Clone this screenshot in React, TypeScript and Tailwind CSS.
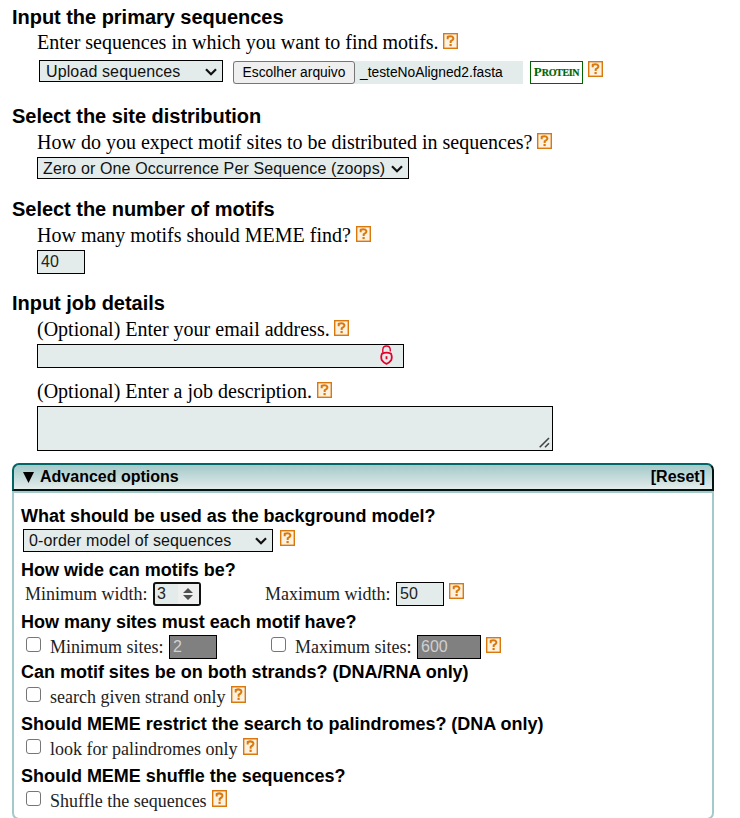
import type { ReactNode } from 'react';

function Help({ className = '', size = 'h-4' }: { className?: string; size?: string }) {
  return (
    <svg className={`w-[15px] shrink-0 ${size} ${className}`} viewBox="0 0 15 16" preserveAspectRatio="none">
      <rect x="0.7" y="0.7" width="13.6" height="14.6" fill="#fdf1e0" stroke="#d9780c" strokeWidth="1.4" />
      <path d="M4.7 6.2V3.8Q7.4 2.7 9.4 3.7Q11.2 5 9.8 6.7L7.7 8.3V10" fill="none" stroke="#d9780c" strokeWidth="2" />
      <rect x="6.5" y="11" width="2.2" height="2.1" fill="#d9780c" />
    </svg>
  );
}

function Heading({ children, className = '' }: { children: ReactNode; className?: string }) {
  return (
    <h2 className={`ml-3 h-[26px] whitespace-nowrap font-["Liberation_Sans",Arial,sans-serif] text-[20px] leading-[26px] font-bold tracking-[-0.03px] ${className}`}>
      {children}
    </h2>
  );
}

function Label({ children, width, className = '' }: { children: ReactNode; width: string; className?: string }) {
  return (
    <div className={`ml-[37px] flex h-[26px] items-start text-[20px] leading-[24px] ${className}`}>
      <span className={`shrink-0 whitespace-nowrap ${width}`}>{children}</span>
      <Help className="mt-[3px]" />
    </div>
  );
}

function Chevron() {
  return (
    <svg className="h-[8px] w-3 shrink-0" viewBox="0 0 12 8">
      <path d="M1 1.2L6 6.2L11 1.2" fill="none" stroke="#111" strokeWidth="2.2" />
    </svg>
  );
}

function Select({ children, className = '' }: { children: ReactNode; className?: string }) {
  return (
    <div className={`flex shrink-0 items-center justify-between border border-black bg-[#e4eceb] pr-[5px] font-["Liberation_Sans",Arial,sans-serif] text-[16px] tracking-[0.12px] whitespace-nowrap text-[#111] ${className}`}>
      <span>{children}</span>
      <Chevron />
    </div>
  );
}

function Field({ children, className = '' }: { children?: ReactNode; className?: string }) {
  return (
    <div className={`flex h-6 shrink-0 items-center border border-black pl-[3px] font-["Liberation_Sans",Arial,sans-serif] text-[16px] ${className}`}>
      {children}
    </div>
  );
}

function Question({ children, className = '' }: { children: ReactNode; className?: string }) {
  return (
    <h3 className={`ml-[7px] h-6 whitespace-nowrap font-["Liberation_Sans",Arial,sans-serif] text-[18px] leading-6 font-bold tracking-[-0.015px] ${className}`}>
      {children}
    </h3>
  );
}

function Check({ className = '' }: { className?: string }) {
  return <span className={`size-[15px] shrink-0 rounded-[3px] border border-[#767676] bg-white ${className}`} />;
}

function Option({ children, width }: { children: ReactNode; width: string }) {
  return (
    <div className="ml-3 flex h-[28px] items-start">
      <Check className="mt-[3px]" />
      <span className={`ml-[9px] shrink-0 text-[18px] leading-[26px] whitespace-nowrap text-[#222] ${width}`}>{children}</span>
      <Help className="mt-[2px]" size="h-[17px]" />
    </div>
  );
}

export default function App() {
  return (
    <div className='h-[818px] w-[740px] overflow-hidden bg-white pt-1 font-["Liberation_Serif","Times_New_Roman",serif] text-black'>
      <Heading>Input the primary sequences</Heading>
      <Label width="w-[406px]">Enter sequences in which you want to find motifs.</Label>
      <div className="mt-1 ml-[39px] flex h-[26px] items-start">
        <Select className="h-[22px] w-[184px] pt-px pl-[6px]">Upload sequences</Select>
        <div className='mt-px ml-[10px] flex h-[23px] w-[290px] bg-[#e4eceb] font-["Liberation_Sans",Arial,sans-serif] text-[13.8px] leading-[21px] whitespace-nowrap'>
          <span className="w-[122px] rounded-[3px] border border-[#767676] bg-[#efefef] text-center">Escolher arquivo</span>
          <span className="ml-[5px] leading-[23px]">_testeNoAligned2.fasta</span>
        </div>
        <span className="mt-px ml-[7px] flex h-[23px] w-[53px] items-baseline justify-center border border-[#006400] text-[13px] leading-[20px] font-bold text-[#006400]">
          P<span className="text-[10px] tracking-[-0.35px] [-webkit-text-stroke:0.2px_#006400]">ROTEIN</span>
        </span>
        <Help className="mt-px ml-[5px]" />
      </div>

      <Heading className="mt-[17px]">Select the site distribution</Heading>
      <Label className="mt-px" width="w-[500px]">How do you expect motif sites to be distributed in sequences?</Label>
      <Select className="mt-px ml-[37px] h-[22px] w-[372px] pt-px pl-[5px]">Zero or One Occurrence Per Sequence (zoops)</Select>

      <Heading className="mt-[17px]">Select the number of motifs</Heading>
      <Label className="mt-px" width="w-[319px]">How many motifs should MEME find?</Label>
      <Field className="mt-px ml-[37px] w-12 bg-[#e4eceb] text-[#222]">40</Field>

      <Heading className="mt-4">Input job details</Heading>
      <Label className="mt-px" width="w-[297px]">(Optional) Enter your email address.</Label>
      <Field className="mt-px ml-[37px] w-[367px] justify-end bg-[#e4eceb] pr-[10px] pb-[2px]">
        <svg className="h-5 w-[13px]" viewBox="0 0 13 20">
          <path d="M2.8 7.8V4.6Q3 1 6.5 1Q10 1 10.3 4.8V6.5" fill="none" stroke="#e4002b" strokeWidth="1.4" />
          <path d="M2 8.6Q6.5 6.8 11 8.6Q12.4 11.6 11.3 15Q9.5 17.7 6.5 18.8Q3.5 17.7 1.7 15Q0.6 11.6 2 8.6Z" fill="none" stroke="#e4002b" strokeWidth="1.8" />
          <rect x="5.6" y="11.2" width="1.8" height="3" fill="#e4002b" />
        </svg>
      </Field>
      <Label className="mt-[11px]" width="w-[280px]">(Optional) Enter a job description.</Label>
      <div className="mt-px ml-[37px] flex h-[45px] w-[516px] items-end justify-end border border-black bg-[#e4eceb] p-[2px]">
        <svg className="size-[11px]" viewBox="0 0 11 11">
          <path d="M0.7 10.3L10 1M6 10.3L10 6.3" stroke="#444" strokeWidth="1.6" />
        </svg>
      </div>

      <section className="mt-3 ml-3 w-[702px]">
        <div className='flex h-7 items-center justify-between rounded-t-[7px] border-2 border-t-[#006666] border-r-[#001414] border-b-[#001414] border-l-[#006666] bg-linear-to-b from-[#a3c9c9] to-[#e4eceb] pr-[7px] pl-[9px] font-["Liberation_Sans",Arial,sans-serif] text-[16px] font-bold'>
          <span className="flex items-center gap-[6px]">
            <svg className="h-[11px] w-[11px]" viewBox="0 0 11 11"><path d="M0 0H11L5.5 11Z" /></svg>
            Advanced options
          </span>
          <span>[Reset]</span>
        </div>
        <div className="h-[329px] rounded-b-[7px] border-2 border-[#a3c9c9] pt-[11px]">
          <Question>What should be used as the background model?</Question>
          <div className="mt-px ml-[9px] flex items-start">
            <Select className="h-[23px] w-[250px] pl-[5px]">0-order model of sequences</Select>
            <Help className="mt-px ml-[7px]" />
          </div>
          <Question className="mt-[6px]">How wide can motifs be?</Question>
          <div className="ml-[11px] flex h-6 items-start text-[18px] leading-6 whitespace-nowrap text-[#222]">
            <span className="w-[128px]">Minimum width:</span>
            <div className='flex h-6 w-12 items-center rounded-[3px] border-2 border-[#111] bg-[#e4eceb] pl-[2px] font-["Liberation_Sans",Arial,sans-serif] text-[16px]'>
              <span className="w-[21px]">3</span>
              <span className="flex h-full flex-1 items-center bg-[#efefef] pl-[5px]">
                <svg className="h-3 w-[10px]" viewBox="0 0 10 12"><path d="M5 0L10 5H0ZM0 7H10L5 12Z" fill="#505050" /></svg>
              </span>
            </div>
            <span className="ml-16 w-[131px]">Maximum width:</span>
            <Field className="w-12 bg-[#e4eceb]">50</Field>
            <Help className="mt-px ml-[5px]" />
          </div>
          <Question className="mt-1">How many sites must each motif have?</Question>
          <div className="mt-px ml-3 flex h-6 items-start text-[18px] leading-6 whitespace-nowrap text-[#222]">
            <Check className="mt-[2px]" />
            <span className="ml-[9px] w-[119px]">Minimum sites:</span>
            <Field className="w-12 bg-[#808080] text-[#d0d0d0]">2</Field>
            <Check className="mt-[2px] ml-[54px]" />
            <span className="ml-[9px] w-[122px]">Maximum sites:</span>
            <Field className="w-16 bg-[#808080] text-[#d0d0d0]">600</Field>
            <Help className="mt-[2px] ml-[5px]" />
          </div>
          <Question className="mt-px">Can motif sites be on both strands? (DNA/RNA only)</Question>
          <Option width="w-[181px]">search given strand only</Option>
          <Question>Should MEME restrict the search to palindromes? (DNA only)</Question>
          <Option width="w-[193px]">look for palindromes only</Option>
          <Question>Should MEME shuffle the sequences?</Question>
          <Option width="w-[162px]">Shuffle the sequences</Option>
        </div>
      </section>
    </div>
  );
}
